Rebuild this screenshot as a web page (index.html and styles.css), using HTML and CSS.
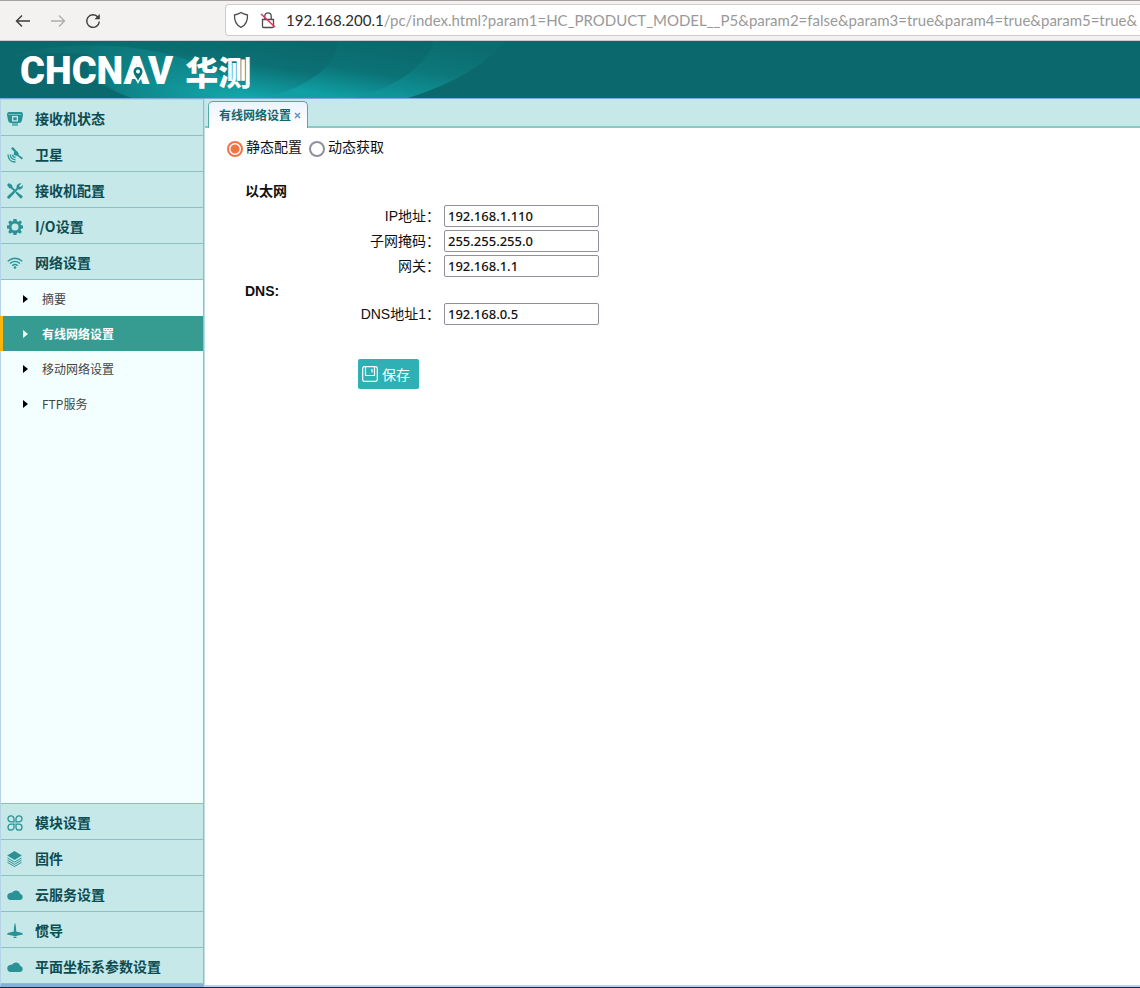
FILE: index.html
```html
<!DOCTYPE html>
<html lang="zh-CN">
<head>
<meta charset="utf-8">
<title>CHCNAV 华测</title>
<link rel="stylesheet" href="styles.css">
</head>
<body>
<div class="toolbar">
  <button class="nav-btn" type="button" aria-label="后退"><svg width="16" height="16" viewBox="0 0 16 16"><path d="M15 8H2M7 2.500L1.500 8L7 13.500"/></svg></button>
  <button class="nav-btn nav-off" type="button" aria-label="前进"><svg width="16" height="16" viewBox="0 0 16 16"><path d="M1 8H14M9 2.500L14.500 8L9 13.500"/></svg></button>
  <button class="nav-btn" type="button" aria-label="刷新"><svg width="16" height="16" viewBox="0 0 16 16"><path d="M13 4.200A6.300 6.300 0 1 0 14.300 8.500"/><path d="M14.800 1V6.300H9.500Z" fill="#3d3d3d" stroke="none"/></svg></button>
  <div class="address">
    <svg class="shield" width="16" height="18" viewBox="0 0 16 18"><path d="M8 1.500C10 3 12 3.500 14.500 4C14.800 9.500 13 14 8 16.300C3 14 1.200 9.500 1.500 4C4 3.500 6 3 8 1.500Z"/></svg>
    <svg class="lock" width="16" height="18" viewBox="0 0 16 18"><path d="M2.500 8.500H13.500V15.500Q13.500 16.500 12.500 16.500H3.500Q2.500 16.500 2.500 15.500ZM4.800 8.500V5A3.200 3.200 0 0 1 11.200 5V8.500"/><path class="strike" d="M1 3L15 16"/></svg>
    <div class="url"><span class="host">192.168.200.1</span>/pc/index.html?param1=HC_PRODUCT_MODEL__P5&amp;param2=false&amp;param3=true&amp;param4=true&amp;param5=true&amp;</div>
  </div>
</div>

<header class="banner">
  <svg class="art" width="520" height="57" viewBox="0 0 520 57" aria-hidden="true">
    <defs>
      <linearGradient id="leaf" gradientUnits="userSpaceOnUse" x1="440" y1="0" x2="430" y2="60"><stop offset="0" stop-color="#0c6b6f"/><stop offset=".5" stop-color="#0c777a"/><stop offset="1" stop-color="#0f9498"/></linearGradient>
      <linearGradient id="leaf-in" gradientUnits="userSpaceOnUse" x1="370" y1="0" x2="360" y2="60"><stop offset="0" stop-color="#0b696d"/><stop offset=".5" stop-color="#0b7276"/><stop offset="1" stop-color="#10a0a4"/></linearGradient>
      <linearGradient id="leaf-core" gradientUnits="userSpaceOnUse" x1="270" y1="0" x2="260" y2="60"><stop offset="0" stop-color="#0b696d"/><stop offset=".4" stop-color="#0b7074"/><stop offset="1" stop-color="#12aaae"/></linearGradient>
      <linearGradient id="petal"><stop offset="0" stop-color="#129a9d" stop-opacity=".05"/><stop offset="1" stop-color="#12a2a5" stop-opacity=".45"/></linearGradient>
      <linearGradient id="fade"><stop offset="0" stop-color="#0b686c"/><stop offset="1" stop-color="#0b686c" stop-opacity="0"/></linearGradient>
    </defs>
    <path fill="url(#leaf)" d="M505 0C485 24 455 42 408 57H240V0Z"/>
    <path fill="url(#leaf-in)" d="M434 0C428 22 400 44 357 57H200V0Z"/>
    <path fill="url(#leaf-core)" d="M338 0C338 22 310 46 265 57H132C98 46 82 22 94 0Z"/>
    <path fill="url(#fade)" d="M80 0H240V57H80Z"/>
    <path fill="url(#petal)" d="M8 18C35 2 120 -2 178 16C213 26 234 43 246 57H132C98 46 80 30 90 14C60 10 30 12 8 18Z"/>
  </svg>
  <div class="brand">
    <span class="brand-en">CHCNAV<svg class="pin" width="16" height="21" viewBox="0 0 16 21"><path d="M8 20C6 15 1.500 12 1.500 7.500A6.500 6.500 0 0 1 14.500 7.500C14.500 12 10 15 8 20Z" fill="#fff"/><path d="M8 17C6.500 13 3.500 11 3.500 7.500A4.500 4.500 0 0 1 12.500 7.500C12.500 11 9.500 13 8 17Z" fill="#087477"/><circle cx="8" cy="7.500" r="2" fill="#fff"/></svg></span>
    <span class="brand-cn">华测</span>
  </div>
</header>

<div class="workspace">
  <nav class="sidebar">
    <a class="group" href="#status"><svg class="icon" viewBox="0 0 16 16"><path fill-rule="evenodd" d="M2 1H14Q16 1 16 4L15 9Q14.500 12 12 12H4Q1.500 12 1 9L0 4Q0 1 2 1ZM5 5V10.500H11V5ZM1.500 3V3.600H14.500V3ZM6.300 6.300H9.700V9.200H6.300Z"/><path d="M5 12H11V15H5Z" opacity=".6"/></svg>接收机状态</a>
    <a class="group" href="#sat"><svg class="icon" viewBox="0 0 16 16"><path d="M4 1.500L6 0L9.500 4L8 5.500ZM7 5L10 4L12 7L10 9L7 8ZM11 7.500L16 11L14.800 12.500L10.500 9Z"/><path class="line" d="M1 7.500C1 12 4 15 8.500 15M3.200 7.500C3.500 10.700 5.500 12.500 8.500 12.800M5.500 7.500C5.700 9.300 6.700 10.300 8.500 10.500"/></svg>卫星</a>
    <a class="group" href="#config"><svg class="icon" viewBox="0 0 16 16"><path d="M0 2L2 0L5 2L5.500 4L8 6.700L6.800 8L4 5.500L2.200 5ZM9.500 8.500L15.500 13Q16 15.500 13.500 15.500L8.500 10ZM11 1Q13 0 14.500.5L12 2.800L13.200 4.200L15.800 2Q16.300 5 13.800 6.200Q12.500 6.800 11.200 6.200L3.500 14.500Q1.800 16.500.6 15.300Q-.5 14 1.300 12.500L9.700 5Q9 2.500 11 1Z"/></svg>接收机配置</a>
    <a class="group" href="#io"><svg class="icon" viewBox="0 0 16 16"><path fill-rule="evenodd" d="M6.500 0H9.500L10 2.200L11.300 2.700L13.200 1.500L15 3.200L13.500 5.200L14 6.300L16 6.600V9.400L14 9.800L13.500 11L14.800 13L13 14.800L11 13.500L9.900 14L9.500 16H6.500L6.100 14L5 13.500L3 14.800L1.200 13L2.500 11L2 9.800L0 9.400V6.600L2 6.300L2.500 5.200L1.200 3.200L3 1.400L5 2.600L6.100 2.200ZM8 4.500A3.500 3.500 0 1 0 8 11.500A3.500 3.500 0 0 0 8 4.500Z"/></svg>I/O设置</a>
    <a class="group" href="#network"><svg class="icon" viewBox="0 0 16 16"><path class="line" d="M.7 6.300Q8 .2 15.300 6.300M3 8.500Q8 4.200 13 8.500M5.200 10.700Q8 8.300 10.800 10.700"/><circle cx="8" cy="12.500" r="1.300"/></svg>网络设置</a>
    <div class="submenu">
      <a class="item" href="#summary">摘要</a>
      <a class="item active" href="#wired">有线网络设置</a>
      <a class="item" href="#mobile">移动网络设置</a>
      <a class="item" href="#ftp">FTP服务</a>
    </div>
    <a class="group" href="#module"><svg class="icon" viewBox="0 0 16 16"><path class="line" d="M4 .8A3 3 0 1 0 4 6.800H7V3.800A3 3 0 0 0 4 .8ZM12 .8A3 3 0 0 0 9 3.800V6.800H12A3 3 0 1 0 12 .8ZM4 9.200A3 3 0 1 0 7 12.200V9.200ZM12 9.200H9V12.200A3 3 0 1 0 12 9.200Z"/></svg>模块设置</a>
    <a class="group" href="#firmware"><svg class="icon" viewBox="0 0 16 16"><path d="M7.500 0L14.800 4.500L7.500 9L.2 4.500Z"/><path class="thin" d="M.5 7L7.500 11.200L14.500 7M.5 9.200L7.500 13.400L14.500 9.200M.5 11.400L7.500 15.500L14.500 11.400"/></svg>固件</a>
    <a class="group" href="#cloud"><svg class="icon" viewBox="0 0 16 16"><path d="M3.500 13A3.500 3.500 0 0 1 3 6.100Q4 5.300 5.200 5.400A4.600 4.600 0 0 1 13.400 7A3.050 3.050 0 0 1 13 13Z"/></svg>云服务设置</a>
    <a class="group" href="#ins"><svg class="icon" viewBox="0 0 16 16"><path d="M8 0Q9 1.500 9.200 8.500L14.500 9.800Q16 10.500 16 11.500L10 12.800Q9 13.600 8 13.600Q7 13.600 6 12.800L0 11.500Q0 10.500 1.500 9.800L6.800 8.500Q7 1.500 8 0ZM6 14H10L9 15H7Z"/></svg>惯导</a>
    <a class="group" href="#coord"><svg class="icon" viewBox="0 0 16 16"><path d="M3.500 13A3.500 3.500 0 0 1 3 6.100Q4 5.300 5.200 5.400A4.600 4.600 0 0 1 13.400 7A3.050 3.050 0 0 1 13 13Z"/></svg>平面坐标系参数设置</a>
  </nav>

  <main class="panel">
    <div class="tabs">
      <div class="tab"><a class="tab-name" href="#wired">有线网络设置</a><button class="tab-close" type="button" aria-label="关闭"><svg width="7" height="7" viewBox="0 0 7 7"><path d="M1 1L6 6M6 1L1 6"/></svg></button></div>
    </div>
    <form class="form">
      <div class="modes">
        <label class="mode"><input class="radio" type="radio" name="mode" checked>静态配置</label>
        <label class="mode"><input class="radio" type="radio" name="mode">动态获取</label>
      </div>
      <h2 class="title">以太网</h2>
      <div class="fields">
        <label for="ip">IP地址：</label><input class="box" id="ip" type="text" value="192.168.1.110">
        <label for="mask">子网掩码：</label><input class="box" id="mask" type="text" value="255.255.255.0">
        <label for="gateway">网关：</label><input class="box" id="gateway" type="text" value="192.168.1.1">
      </div>
      <h2 class="title title-dns">DNS:</h2>
      <div class="fields">
        <label for="dns">DNS地址1：</label><input class="box" id="dns" type="text" value="192.168.0.5">
      </div>
      <button class="save" type="button"><svg width="16" height="16" viewBox="0 0 16 16"><path d="M2.500.7H13.500Q15.300.7 15.300 2.500V13.500Q15.300 15.300 13.500 15.300H2.500Q.7 15.300.7 13.500V2.500Q.7.700 2.500.7ZM3.500 1V9.500H12.500V1M10 3V6.500"/></svg>保存</button>
    </form>
  </main>
</div>
</body>
</html>
```
FILE: styles.css
```css
* { box-sizing: border-box; }

body {
  margin: 0;
  height: 100vh;
  display: flex;
  flex-direction: column;
  border-bottom: 1px solid #16264a;
  background: #fff;
  color: #111;
  font: 14px/20px "Liberation Sans", "Noto Sans CJK SC", sans-serif;
}

a { color: inherit; text-decoration: none; }
button { margin: 0; padding: 0; border: 0; background: none; font: inherit; }
svg { flex: none; display: block; }

/* Browser toolbar */
.toolbar {
  flex: none;
  height: 41px;
  display: flex;
  align-items: center;
  padding-left: 15px;
  border-top: 1px solid #a5a1a0;
  border-bottom: 1px solid #c9cfcc;
  background: #f4f2f0;
  overflow: hidden;
}
.nav-btn { margin-right: 19px; }
.nav-btn svg { fill: none; stroke: #3d3d3d; stroke-width: 1.4; }
.nav-btn.nav-off svg { stroke: #b0aeac; }
.address {
  flex: 1;
  min-width: 0;
  height: 32px;
  margin: 0 0 2px 105px;
  padding-left: 7px;
  display: flex;
  align-items: center;
  border: 1px solid #cfcdcb;
  border-right: 0;
  border-radius: 4px 0 0 4px;
  background: #fff;
}
.address svg { fill: none; stroke: #4c4c4c; stroke-width: 1.3; }
.lock { margin: 0 10px 0 11px; }
.address .strike { stroke: #e8315b; stroke-width: 1.6; }
.url {
  overflow: hidden;
  white-space: nowrap;
  color: #999;
  font: 15px/20px Lato, sans-serif;
}
.host { color: #2d2d2d; }

/* Banner */
.banner {
  flex: none;
  position: relative;
  height: 58px;
  border-bottom: 1px solid #7fa9dc;
  background: #0b686c;
}
.art { position: absolute; left: 0; top: 0; }
.brand {
  position: relative;
  display: flex;
  align-items: center;
  gap: 12px;
  height: 57px;
  padding: 2px 0 0 20px;
  color: #fff;
}
.brand-en { position: relative; font: 900 38px/54px Roboto, sans-serif; }
.pin { position: absolute; right: 27px; top: 20px; }
.brand-cn { font: 900 33px/48px "Noto Sans CJK SC", sans-serif; }

/* Sidebar */
.workspace { flex: 1; min-height: 0; display: flex; }
.sidebar {
  flex: none;
  width: 204px;
  display: flex;
  flex-direction: column;
  border: 1px solid #b5d3e6;
  border-right-color: #95bdc6;
  border-bottom: 3px solid #85b0d8;
  font-family: "Noto Sans CJK SC", sans-serif;
}
.group {
  flex: none;
  height: 36px;
  display: flex;
  align-items: center;
  gap: 12px;
  padding-left: 6px;
  border-bottom: 1px solid #8cc2c2;
  background: #c6e8e8;
  color: #0d4c50;
  font-weight: 700;
}
.icon { width: 16px; height: 16px; margin-top: 2px; fill: #2a9296; }
.icon .line { fill: none; stroke: #2a9296; stroke-width: 1.3; }
.icon .thin { fill: none; stroke: #2a9296; stroke-width: 1; }
.submenu {
  flex: 1;
  padding-top: 1px;
  border-bottom: 1px solid #8db9dc;
  background: #f3ffff;
}
.item {
  height: 35px;
  display: flex;
  align-items: center;
  gap: 14px;
  padding-left: 22px;
  color: #444;
  font-size: 12px;
}
.item::before {
  content: "";
  border-left: 5px solid #000;
  border-top: 4px solid transparent;
  border-bottom: 4px solid transparent;
}
.active {
  padding-left: 20px;
  margin-left: -1px;
  border-left: 3px solid #fbb40a;
  background: #369c91;
  color: #fff;
  font-weight: 700;
}
.active::before { border-left-color: #fff; }

/* Content */
.panel {
  flex: 1;
  min-width: 0;
  border-left: 1px solid #bcdcec;
  border-bottom: 2px solid #bcd0ec;
}
.tabs {
  height: 29px;
  padding: 2px 0 0 3px;
  display: flex;
  border-bottom: 2px solid #8acac4;
  background: #c6e8e8;
}
.tab {
  height: 27px;
  margin-bottom: -2px;
  display: flex;
  align-items: center;
  gap: 3px;
  padding: 0 6px 0 10px;
  border: 1px solid #55aaa6;
  border-bottom: 0;
  border-radius: 5px 5px 0 0;
  background: linear-gradient(#edf3ff, #fff);
  color: #11696d;
  font: 700 12px/20px "Noto Sans CJK SC", sans-serif;
}
.tab-close svg { fill: none; stroke: #6b8fc8; stroke-width: 1.5; }
.form { padding: 9px 22px; }
.modes { display: flex; gap: 7px; }
.mode { display: flex; align-items: center; gap: 3px; }
.radio {
  appearance: none;
  width: 16px;
  height: 16px;
  margin: 3px 0 0;
  border: 2px solid #8f8f9d;
  border-radius: 50%;
  background: #fff;
}
.radio:checked {
  border-color: #ef7446;
  background: radial-gradient(circle, #ef7446 4px, #fff 5px);
}
.title { margin: 24px 0 4px 18px; font-size: 14px; line-height: 20px; }
.title-dns { margin: 4px 0 2px 18px; }
.fields {
  display: grid;
  grid-template-columns: 213px 155px;
  gap: 3px 4px;
  line-height: 22px;
  text-align: right;
}
.box {
  height: 22px;
  padding: 0 3px;
  border: 1px solid #8f8f9d;
  border-radius: 2px;
  background: #fff;
  color: #111;
  font: 500 13px/20px "Noto Sans", sans-serif;
}
.save {
  height: 30px;
  margin: 34px 0 0 131px;
  padding: 0 9px 0 4px;
  display: flex;
  align-items: center;
  gap: 4px;
  border-radius: 2px;
  background: #2eb0b4;
  color: #fff;
  font-family: "Noto Sans CJK SC", sans-serif;
}
.save svg { fill: none; stroke: #fff; stroke-width: 1.2; }
```
